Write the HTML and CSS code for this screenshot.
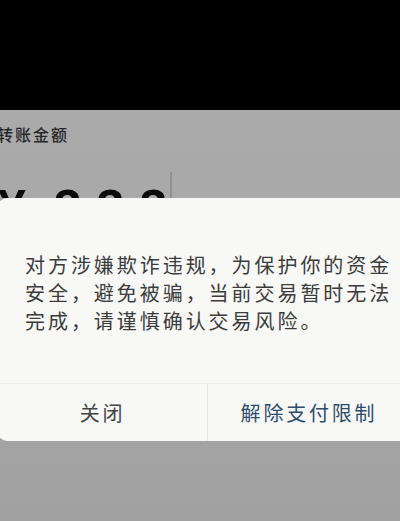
FILE: index.html
```html
<!DOCTYPE html>
<html lang="zh-CN">
<head>
<meta charset="utf-8">
<title>转账</title>
<link rel="stylesheet" href="styles.css">
</head>
<body>
<div class="screen">
  <div class="topbar"></div>
  <div class="page">
    <div class="label">转账金额</div>
    <div class="amount-row">
      <div class="amount">
        <span class="yen">¥</span><span class="digits">333</span>
      </div>
      <div class="cursor"></div>
    </div>
    <div class="dialog">
      <div class="message">对方涉嫌欺诈违规，为保护你的资金安全，避免被骗，当前交易暂时无法完成，请谨慎确认交易风险。</div>
      <div class="actions">
        <div class="btn btn-close">关闭</div>
        <div class="btn btn-unlock">解除支付限制</div>
      </div>
    </div>
    <div class="bottom"></div>
  </div>
</div>
</body>
</html>
```

FILE: styles.css
```css
* { box-sizing: border-box; }
html, body {
  margin: 0;
  padding: 0;
  width: 400px;
  height: 521px;
  overflow: hidden;
  background: #a3a3a3;
  font-family: "Noto Sans CJK SC", "Noto Sans", sans-serif;
}
.screen {
  width: 400px;
  height: 521px;
  display: flex;
  flex-direction: column;
  overflow: hidden;
}
.topbar {
  height: 110px;
  background: #000;
  flex: none;
}
.page {
  flex: 1;
  background: linear-gradient(#aaaaaa, #a8a8a8 40%, #a1a1a1);
  display: flex;
  flex-direction: column;
  overflow: hidden;
}
.label {
  margin: 14px 0 0 -3px;
  font-size: 16px;
  line-height: 20px;
  letter-spacing: 2px;
  color: #262626;
  font-weight: 500;
}
.amount-row {
  margin-top: 26px;
  height: 28px;
  overflow: hidden;
  display: flex;
  align-items: flex-start;
  flex: none;
}
.amount {
  margin-top: 13px;
  margin-left: -2px;
  font-family: "Liberation Sans", Arial, sans-serif;
  font-weight: 700;
  font-size: 50px;
  line-height: 50px;
  color: #0a0a0a;
  display: flex;
}
.yen {
  margin-right: 28px;
}
.digits {
  letter-spacing: 15px;
}
.cursor {
  margin-left: -12px;
  margin-top: 2px;
  width: 2px;
  height: 26px;
  background: #8c948c;
}
.dialog {
  flex: none;
  margin: 0 -10px 0 -2px;
  background: #f8f8f6;
  border-radius: 9px;
  display: flex;
  flex-direction: column;
}
.message {
  padding: 53px 14px 48px 27px;
  font-size: 20px;
  line-height: 28px;
  letter-spacing: 2.95px;
  color: #3c3c3c;
}
.actions {
  display: flex;
  height: 58px;
  border-top: 1px solid #ececea;
}
.btn {
  display: flex;
  align-items: center;
  justify-content: center;
  font-size: 20px;
  letter-spacing: 2.8px;
}
.btn-close {
  width: 210px;
  color: #444;
  border-right: 1px solid #e6e6e4;
}
.btn-unlock {
  flex: 1;
  color: #2e4d6c;
}
.bottom {
  flex: 1;
}
```
